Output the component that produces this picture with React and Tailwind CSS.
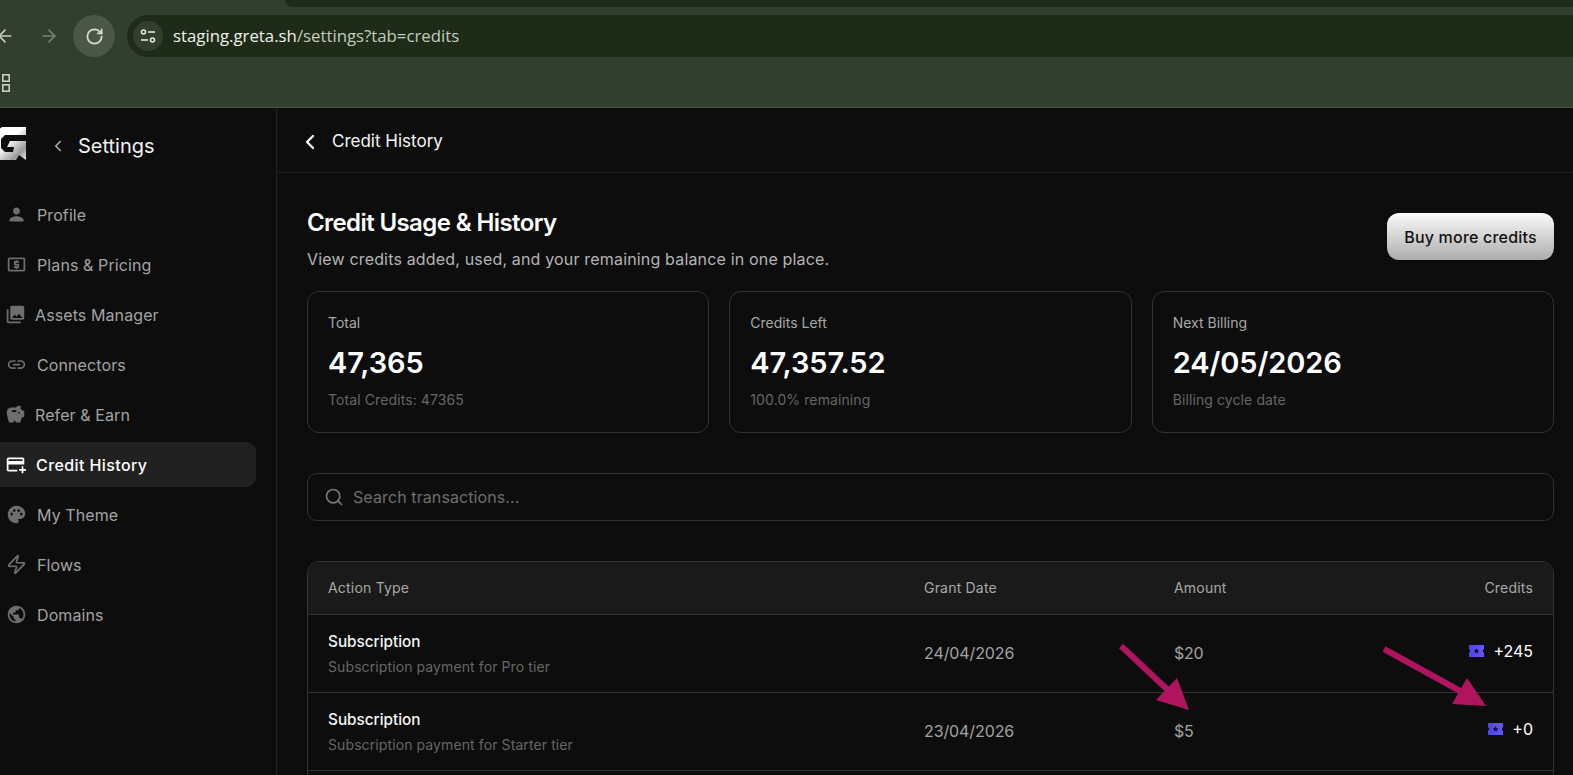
import { ArrowLeft, ArrowRight, RotateCw, ChevronLeft, Search, Zap } from 'lucide-react'
import {
  MdPerson,
  MdOutlineLocalAtm,
  MdPhotoLibrary,
  MdLink,
  MdSavings,
  MdOutlineAddCard,
  MdPalette,
  MdPublic,
} from 'react-icons/md'

const navItems = [
  { label: 'Profile', icon: MdPerson, pad: 'pl-[6px]', gap: 'gap-[10px]' },
  { label: 'Plans & Pricing', icon: MdOutlineLocalAtm, pad: 'pl-[6px]', gap: 'gap-[10px]' },
  { label: 'Assets Manager', icon: MdPhotoLibrary, pad: 'pl-[5px]', gap: 'gap-[9px]' },
  { label: 'Connectors', icon: MdLink, pad: 'pl-[6px]', gap: 'gap-[10px]' },
  { label: 'Refer & Earn', icon: MdSavings, pad: 'pl-[5px]', gap: 'gap-[9px]' },
  { label: 'Credit History', icon: MdOutlineAddCard, pad: 'pl-[5px]', gap: 'gap-[10px]', active: true },
  { label: 'My Theme', icon: MdPalette, pad: 'pl-[6px]', gap: 'gap-[10px]' },
  { label: 'Flows', icon: Zap, pad: 'pl-[6px]', gap: 'gap-[10px]' },
  { label: 'Domains', icon: MdPublic, pad: 'pl-[6px]', gap: 'gap-[10px]' },
]

const stats = [
  { label: 'Total', value: '47,365', note: 'Total Credits: 47365' },
  { label: 'Credits Left', value: '47,357.52', note: '100.0% remaining' },
  { label: 'Next Billing', value: '24/05/2026', note: 'Billing cycle date' },
]

const rows = [
  { title: 'Subscription', desc: 'Subscription payment for Pro tier', date: '24/04/2026', amount: '$20', credits: '+245' },
  { title: 'Subscription', desc: 'Subscription payment for Starter tier', date: '23/04/2026', amount: '$5', credits: '+0' },
]

function TicketIcon() {
  return (
    <svg width="15" height="12" viewBox="0 0 15 12">
      <defs>
        <linearGradient id="ticketFill" x1="0" y1="0" x2="1" y2="0">
          <stop offset="0" stopColor="#4f46e8" />
          <stop offset="1" stopColor="#6256fb" />
        </linearGradient>
      </defs>
      <path
        d="M0 0h15v4.6a1.2 1.4 0 0 0 0 2.8V12H0V7.4a1.2 1.4 0 0 0 0-2.8z"
        fill="url(#ticketFill)"
      />
      <path
        d="M7.5 3l.9 2 2.1.2-1.6 1.4.5 2.1-1.9-1.1-1.9 1.1.5-2.1-1.6-1.4 2.1-.2z"
        fill="#14123a"
      />
    </svg>
  )
}

function GretaLogo() {
  return (
    <svg width="34" height="34" viewBox="0 0 34 34" className="-ml-[8px] -mt-[4px]">
      <defs>
        <linearGradient id="logoFill" x1="0" y1="0" x2="1" y2="1">
          <stop offset="0.45" stopColor="#ffffff" />
          <stop offset="0.8" stopColor="#9a9a9a" />
          <stop offset="1" stopColor="#e8e8e8" />
        </linearGradient>
      </defs>
      <path
        d="M10 0h24v8H13l-4 4v9l4 4h8l1-5h-7l3-6h16v19l-7-5-3 5H8l-8-8V8z"
        fill="url(#logoFill)"
      />
    </svg>
  )
}

function Sidebar() {
  return (
    <aside className="w-[277px] shrink-0 border-r border-[#222222] bg-[#0d0d0d]">
      <div className="flex h-[76px] items-center">
        <GretaLogo />
        <ChevronLeft size={18} strokeWidth={2.25} className="ml-[23px] text-[#a8a8a8]" />
        <span className="ml-[11px] text-[20px] text-[#f2f2f2]">Settings</span>
      </div>
      <nav className="mt-[8px] flex w-[256px] flex-col gap-[5px]">
        {navItems.map((item) => {
          const Icon = item.icon
          return (
            <div
              key={item.label}
              className={`flex h-[45px] items-center rounded-r-[10px] text-[16px] ${item.pad} ${item.gap} ${
                item.active ? 'bg-[#212121] font-medium tracking-[0.4px] text-white' : 'tracking-[0.1px] text-[#a3a3a3]'
              }`}
            >
              <Icon size={21} className={item.active ? 'text-white' : 'text-[#6e6e6e]'} />
              <span>{item.label}</span>
            </div>
          )
        })}
      </nav>
    </aside>
  )
}

function BrowserBar() {
  return (
    <div className="h-[108px] shrink-0 border-b border-[#4a5445] bg-[#333f2e]">
      <div className="ml-[285px] h-[7px] rounded-bl-[10px] bg-[#1e2b19]" />
      <div className="mt-[8px] flex h-[42px] items-center">
        <ArrowLeft size={20} strokeWidth={2} className="-ml-[5px] text-[#c6d0c0]" />
        <ArrowRight size={20} strokeWidth={2} className="ml-[24px] text-[#76836f]" />
        <div className="ml-[14px] flex h-[42px] w-[42px] items-center justify-center rounded-full bg-[#4a5845]">
          <RotateCw size={19} strokeWidth={2.25} className="text-[#d3dccd]" />
        </div>
        <div className="ml-[12px] flex h-[42px] flex-1 items-center rounded-l-full bg-[#1e2b19] pl-[6px]">
          <div className="flex h-[30px] w-[30px] items-center justify-center rounded-full bg-[#333f2e]">
            <svg width="16" height="14" viewBox="0 0 16 14" fill="none" stroke="#dfe6da" strokeWidth="1.6">
              <circle cx="3.5" cy="3" r="2" />
              <path d="M8 3h7" />
              <path d="M1 11h7" />
              <circle cx="12.5" cy="11" r="2" />
            </svg>
          </div>
          <span className="ml-[10px] font-['Open_Sans',sans-serif] text-[16.8px] text-[#c1cbbc]">
            <span className="text-[#eef2eb]">staging.greta.sh</span>/settings?tab=credits
          </span>
        </div>
      </div>
      <svg width="11" height="18" viewBox="0 0 11 18" fill="none" stroke="#c6d0c0" strokeWidth="1.6" className="mt-[17px]">
        <rect x="2.8" y="0.8" width="6.4" height="6.4" />
        <rect x="2.8" y="10.8" width="6.4" height="6.4" />
      </svg>
    </div>
  )
}

function Main() {
  return (
    <main className="min-w-0 flex-1 bg-[#0d0d0d]">
      <div className="flex h-[65px] items-center border-b border-[#222222] pl-[21px] pt-[4px]">
        <ChevronLeft size={24} strokeWidth={2.25} className="text-white" />
        <span className="ml-[10px] text-[17px] text-[#f5f5f5]">Credit History</span>
      </div>
      <div className="pl-[30px] pr-[19px]">
        <div className="flex items-start justify-between pt-[34px]">
          <div>
            <h1 className="text-[24px] leading-[32px] font-semibold tracking-[-0.6px] text-white">
              Credit Usage &amp; History
            </h1>
            <p className="mt-[8px] text-[16px] leading-[24px] tracking-[0.17px] text-[#b5b5b5]">
              View credits added, used, and your remaining balance in one place.
            </p>
          </div>
          <button
            type="button"
            className="mt-[6px] h-[47px] w-[167px] rounded-[12px] bg-gradient-to-b from-[#fbfbfb] to-[#adadad] text-[16px] font-medium tracking-[0.2px] text-[#111111]"
          >
            Buy more credits
          </button>
        </div>

        <div className="mt-[20px] grid grid-cols-3 gap-[20px]">
          {stats.map((stat) => (
            <div key={stat.label} className="h-[142px] rounded-[12px] border border-[#333333] px-[20px] pt-[21px]">
              <div className="text-[14px] leading-[20px] text-[#a8a8a8]">{stat.label}</div>
              <div className="mt-[12px] text-[29px] leading-[36px] font-semibold tracking-[-0.1px] text-white">
                {stat.value}
              </div>
              <div className="mt-[9px] text-[14px] leading-[20px] tracking-[0.1px] text-[#666666]">{stat.note}</div>
            </div>
          ))}
        </div>

        <div className="mt-[40px] flex h-[48px] items-center rounded-[10px] border border-[#333333] pl-[16px]">
          <Search size={20} strokeWidth={2} className="text-[#777777]" />
          <span className="ml-[9px] text-[16px] tracking-[0.1px] text-[#6e6e6e]">Search transactions...</span>
        </div>

        <div className="mt-[40px] overflow-hidden rounded-t-[12px] border border-[#333333]">
          <div className="grid h-[53px] grid-cols-[596px_250px_1fr_auto] items-center border-b border-[#333333] bg-[#1a1a1a] px-[20px] pb-[2px] text-[14px] tracking-[0.2px] text-[#a8a8a8]">
            <span>Action Type</span>
            <span>Grant Date</span>
            <span>Amount</span>
            <span>Credits</span>
          </div>
          {rows.map((row) => (
            <div
              key={row.date}
              className="grid h-[78px] grid-cols-[596px_250px_1fr_auto] items-center border-b border-[#333333] px-[20px]"
            >
              <div>
                <div className="text-[15.3px] leading-[22px] font-medium text-[#f5f5f5]">{row.title}</div>
                <div className="mt-[4px] text-[14px] leading-[20px] tracking-[0.1px] text-[#666666]">{row.desc}</div>
              </div>
              <span className="-mt-[2px] text-[16px] tracking-[-0.1px] text-[#a3a3a3]">{row.date}</span>
              <span className="-mt-[2px] text-[16px] tracking-[-0.2px] text-[#a3a3a3]">{row.amount}</span>
              <div className="-mt-[5px] flex items-center gap-[9px]">
                <TicketIcon />
                <span className="text-[16px] text-white">{row.credits}</span>
              </div>
            </div>
          ))}
          <div className="h-[60px]" />
        </div>
      </div>
    </main>
  )
}

// the two annotation arrows drawn on top of the screenshot
function Arrows() {
  return (
    <svg width="1573" height="775" viewBox="0 0 1573 775" className="pointer-events-none absolute left-0 top-0">
      <path d="M1121 646L1170 692" stroke="#b0145f" strokeWidth="6" />
      <path d="M1189 710L1177 678L1156 700z" fill="#b0145f" />
      <path d="M1384 649L1462 692" stroke="#b0145f" strokeWidth="6" />
      <path d="M1486 706L1467 678L1452 704z" fill="#b0145f" />
    </svg>
  )
}

export default function App() {
  return (
    <div className="relative flex h-[775px] w-[1573px] flex-col overflow-hidden bg-[#0d0d0d] font-['Inter',sans-serif]">
      <BrowserBar />
      <div className="flex min-h-0 flex-1">
        <Sidebar />
        <Main />
      </div>
      <Arrows />
    </div>
  )
}
